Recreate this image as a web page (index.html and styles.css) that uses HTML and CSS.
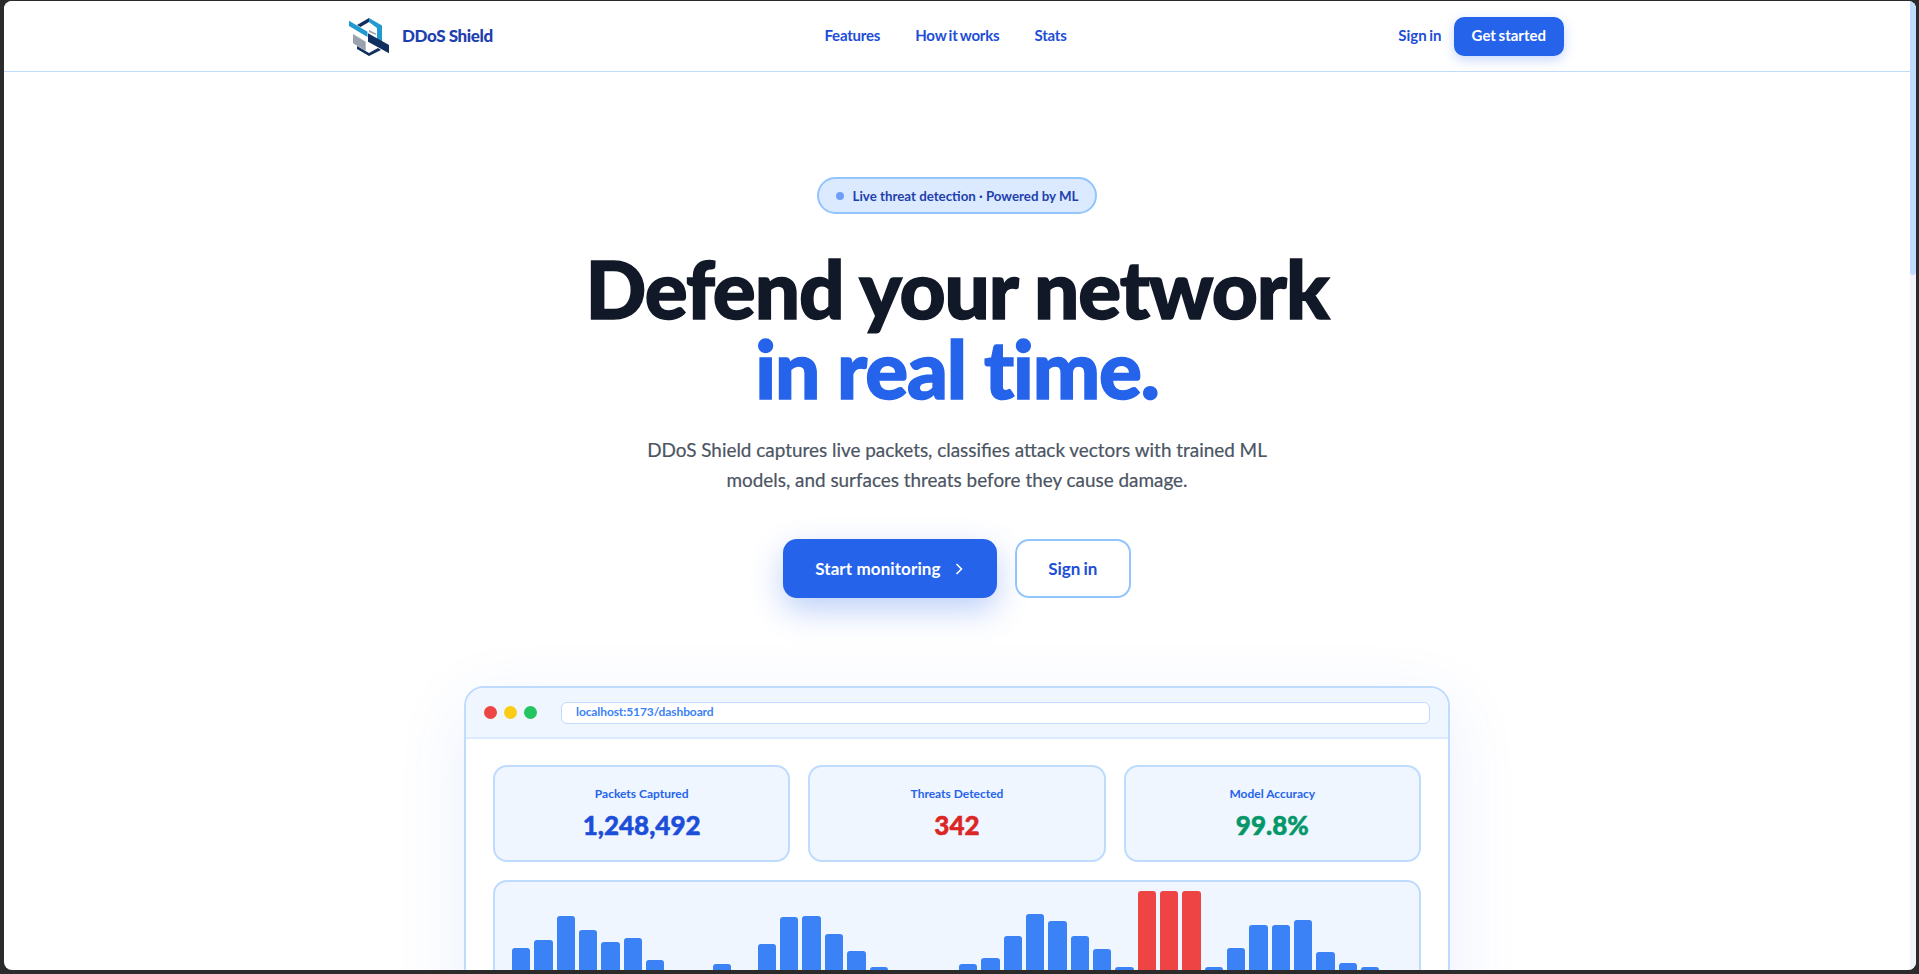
FILE: index.html
```html
<!DOCTYPE html>
<html lang="en">
<head>
<meta charset="utf-8">
<title>DDoS Shield</title>
<link rel="stylesheet" href="styles.css">
</head>
<body>
<div class="window">
  <div class="page">
    <header class="nav">
      <div class="nav-inner">
        <a class="brand" href="#">
          <svg class="logo" viewBox="0 0 40 39" aria-hidden="true">
            <polygon points="8,8 20,1 20,5 11.5,10" fill="#12305f"/>
            <polygon points="20,1 33,8.5 33,27 28,24 28,11 20,5" fill="#1f9bd1"/>
            <polygon points="0,3.7 18.5,14.7 18.5,20 0,9" fill="#1f9bd1"/>
            <polygon points="20,13 27,16.5 27,18 20,15" fill="#9aa3ad"/>
            <polygon points="4,17 16.7,24.7 16.7,33.7 4,26.3" fill="#9aa3ad"/>
            <polygon points="19,16.3 40,28 40,36.3 19,24.7" fill="#12305f"/>
            <polygon points="8,29 20,36 29,31 32,33 20,39 8,32" fill="#12305f"/>
          </svg>
          <span class="brand-name">DDoS Shield</span>
        </a>
        <nav class="links">
          <a href="#">Features</a>
          <a href="#">How it works</a>
          <a href="#">Stats</a>
        </nav>
        <div class="actions">
          <a class="signin" href="#">Sign in</a>
          <a class="cta" href="#">Get started</a>
        </div>
      </div>
    </header>

    <main class="hero">
      <div class="badge"><span class="badge-dot"></span>Live threat detection · Powered by ML</div>
      <h1 class="title">Defend your network<span class="accent">in real time.</span></h1>
      <p class="lead">DDoS Shield captures live packets, classifies attack vectors with trained ML<br>models, and surfaces threats before they cause damage.</p>
      <div class="hero-actions">
        <a class="btn-primary" href="#">Start monitoring
          <svg class="chev" viewBox="0 0 10 16" aria-hidden="true"><path d="M2.5 3l5 5-5 5"/></svg>
        </a>
        <a class="btn-outline" href="#">Sign in</a>
      </div>

      <section class="mock">
        <div class="mock-bar">
          <div class="dots"><span class="dot red"></span><span class="dot yellow"></span><span class="dot green"></span></div>
          <div class="url">localhost:5173/dashboard</div>
        </div>
        <div class="mock-body">
          <div class="stats">
            <div class="stat"><div class="stat-label">Packets Captured</div><div class="stat-value blue">1,248,492</div></div>
            <div class="stat"><div class="stat-label">Threats Detected</div><div class="stat-value danger">342</div></div>
            <div class="stat"><div class="stat-label">Model Accuracy</div><div class="stat-value ok">99.8%</div></div>
          </div>
          <div class="chart">
            <span class="b" style="height:63px"></span><span class="b" style="height:71px"></span><span class="b" style="height:95px"></span><span class="b" style="height:81px"></span><span class="b" style="height:69px"></span><span class="b" style="height:73px"></span><span class="b" style="height:51px"></span><span class="b" style="height:30px"></span><span class="b" style="height:25px"></span><span class="b" style="height:47px"></span>
            <span class="b" style="height:35px"></span><span class="b" style="height:67px"></span><span class="b" style="height:94px"></span><span class="b" style="height:95px"></span><span class="b" style="height:77px"></span><span class="b" style="height:60px"></span><span class="b" style="height:44px"></span><span class="b" style="height:30px"></span><span class="b" style="height:25px"></span><span class="b" style="height:35px"></span>
            <span class="b" style="height:47px"></span><span class="b" style="height:53px"></span><span class="b" style="height:75px"></span><span class="b" style="height:97px"></span><span class="b" style="height:90px"></span><span class="b" style="height:75px"></span><span class="b" style="height:62px"></span><span class="b" style="height:44px"></span><span class="b hot" style="height:120px"></span><span class="b hot" style="height:120px"></span>
            <span class="b hot" style="height:120px"></span><span class="b" style="height:44px"></span><span class="b" style="height:63px"></span><span class="b" style="height:86px"></span><span class="b" style="height:86px"></span><span class="b" style="height:91px"></span><span class="b" style="height:59px"></span><span class="b" style="height:48px"></span><span class="b" style="height:44px"></span><span class="b" style="height:30px"></span>
          </div>
        </div>
      </section>
    </main>
  </div>
  <div class="scrollbar"><div class="thumb"></div></div>
</div>
</body>
</html>
```

FILE: styles.css
```css
* { box-sizing: border-box; }
html, body { height: 100%; margin: 0; }
body {
  background: #2b2b2b;
  padding: 1px 3px 4px 4px;
  overflow: hidden;
  font-family: "Lato", "Noto Sans", sans-serif;
}
a { text-decoration: none; color: inherit; }

.window {
  display: flex;
  height: 100%;
  background: #fff;
  border-radius: 8px;
  overflow: hidden;
}
.page { flex: 1; min-width: 0; overflow: hidden; }
.scrollbar { width: 6px; background: #f1f5f9; flex: none; }
.thumb { height: 274px; background: #bfdbfe; border-radius: 0 0 3px 3px; }

.nav { height: 71px; border-bottom: 1px solid #bfdbfe; background: #fff; }
.nav-inner {
  display: flex;
  align-items: center;
  justify-content: space-between;
  max-width: 1216px;
  height: 100%;
  margin: 0 auto;
  padding-right: 1px;
}
.brand { display: flex; align-items: center; gap: 13px; }
.logo { width: 40px; height: 39px; display: block; }
.brand-name { margin-bottom: 2px; font-size: 17px; font-weight: 900; color: #1e40af; letter-spacing: -0.4px; }
.links {
  display: flex;
  gap: 35px;
  margin: 0 0 3px 0;
  font-size: 15px;
  font-weight: 700;
  color: #1d4ed8;
  letter-spacing: -0.2px;
  word-spacing: -1px;
}
.actions { display: flex; align-items: center; gap: 12px; }
.signin { margin-bottom: 3px; font-size: 15px; font-weight: 700; color: #1d4ed8; word-spacing: -1px; }
.cta {
  display: flex;
  align-items: center;
  height: 39px;
  padding: 0 18px 2px;
  background: #2563eb;
  color: #fff;
  border-radius: 10px;
  font-size: 15px;
  font-weight: 700;
  word-spacing: -1px;
  box-shadow: 0 4px 12px rgba(37, 99, 235, .25);
}

.hero { display: flex; flex-direction: column; align-items: center; padding-top: 105px; }
.badge {
  display: flex;
  align-items: center;
  height: 37px;
  padding: 0 17px;
  gap: 9px;
  background: #dbeafe;
  border: 2px solid #93c5fd;
  border-radius: 19px;
  font-size: 13.3px;
  font-weight: 700;
  color: #1e40af;
}
.badge-dot { width: 8px; height: 8px; border-radius: 50%; background: #6d9ff8; }
.title {
  margin: 34px 0 0;
  font-size: 80px;
  line-height: 80px;
  font-weight: 900;
  letter-spacing: -1.1px;
  -webkit-text-stroke: 1.5px currentColor;
  color: #111827;
  text-align: center;
}
.accent { display: block; color: #2563eb; }
.lead {
  margin: 27px 0 0;
  font-size: 18.9px;
  line-height: 30px;
  -webkit-text-stroke: 0.2px currentColor;
  color: #4b5563;
  text-align: center;
}
.hero-actions { display: flex; gap: 18px; margin-top: 44px; }
.btn-primary {
  display: flex;
  align-items: center;
  gap: 13px;
  height: 59px;
  padding: 0 33px 0 32px;
  background: #2563eb;
  color: #fff;
  border-radius: 14px;
  font-size: 17px;
  font-weight: 700;
  letter-spacing: 0.1px;
  box-shadow: 0 12px 32px rgba(37, 99, 235, .3);
}
.chev { width: 10px; height: 16px; fill: none; stroke: #fff; stroke-width: 1.6; }
.btn-outline {
  display: flex;
  align-items: center;
  height: 59px;
  padding: 0 31.5px;
  background: #fff;
  color: #1d4ed8;
  border: 2px solid #93c5fd;
  border-radius: 14px;
  font-size: 17px;
  font-weight: 700;
  word-spacing: -1px;
}

.mock {
  width: 986px;
  margin-top: 88px;
  background: #fff;
  border: 2px solid #bfdbfe;
  border-radius: 20px;
  box-shadow: 0 20px 70px rgba(37, 99, 235, .1);
  flex: none;
}
.mock-bar {
  display: flex;
  align-items: center;
  gap: 24px;
  height: 51px;
  padding: 0 18px;
  background: #eff6ff;
  border-bottom: 2px solid #dbeafe;
  border-radius: 18px 18px 0 0;
}
.dots { display: flex; gap: 7px; }
.dot { width: 13px; height: 13px; border-radius: 50%; }
.red { background: #ef4444; }
.yellow { background: #facc15; }
.green { background: #22c55e; }
.url {
  flex: 1;
  height: 22px;
  padding: 0 14px;
  background: #fff;
  border: 1px solid #bfdbfe;
  border-radius: 6px;
  font-size: 12px;
  line-height: 18px;
  font-weight: 700;
  letter-spacing: -0.1px;
  color: #3b82f6;
}
.mock-body { padding: 26px 27px 28px; }
.stats { display: grid; grid-template-columns: repeat(3, 1fr); gap: 18px; }
.stat {
  height: 97px;
  padding-top: 19px;
  background: #eff6ff;
  border: 2px solid #bfdbfe;
  border-radius: 14px;
  text-align: center;
}
.stat-label { font-size: 12px; line-height: 16px; font-weight: 700; color: #2563eb; }
.stat-value {
  margin-top: 7px;
  font-size: 26px;
  line-height: 32px;
  font-weight: 900;
  -webkit-text-stroke: 0.5px currentColor;
}
.blue { color: #1d4ed8; }
.danger { color: #dc2626; }
.ok { color: #059669; }
.chart {
  display: flex;
  align-items: flex-end;
  gap: 4px;
  height: 133px;
  margin-top: 18px;
  padding: 0 17px;
  background: #eff6ff;
  border: 2px solid #bfdbfe;
  border-radius: 14px;
}
.b { flex: 1; background: #3b82f6; border-radius: 3px 3px 0 0; }
.hot { background: #ef4444; }
```
